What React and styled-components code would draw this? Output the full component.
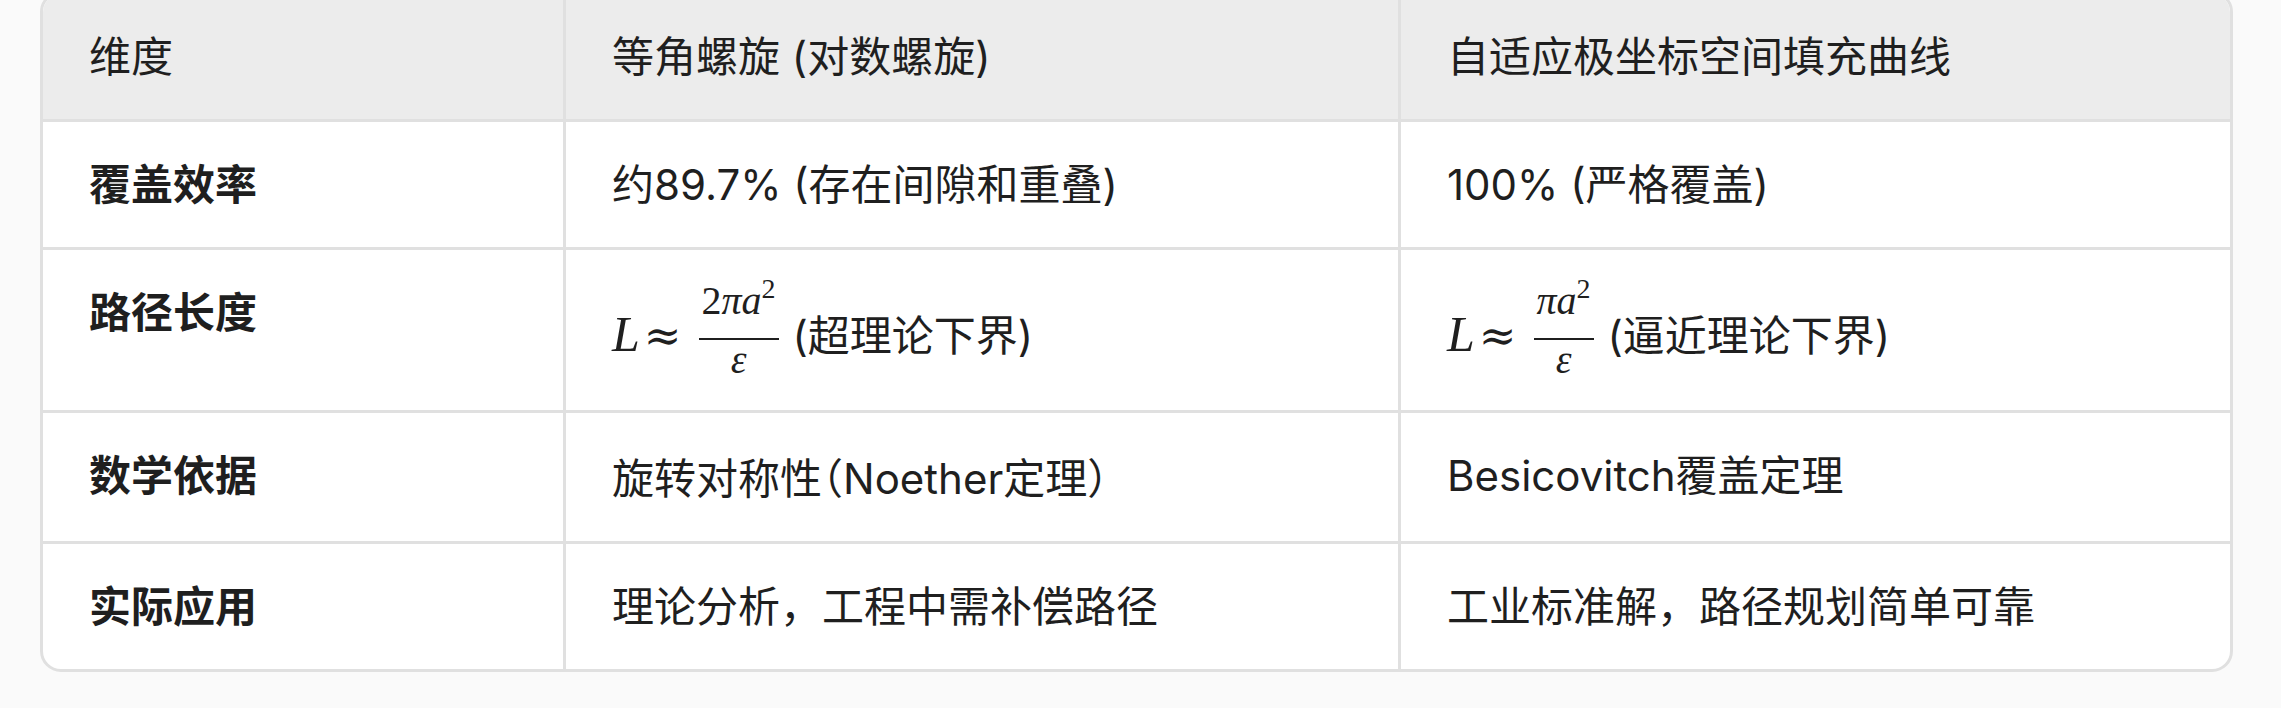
import React from 'react';
import styled, { createGlobalStyle } from 'styled-components';

const GlobalStyle = createGlobalStyle`
    html, body {
        margin: 0;
        padding: 0;
        background: #fafafa;
    }
`;

const Page = styled.div`
    box-sizing: border-box;
    min-height: 100vh;
    padding: 0 48px 0 40px;
    background: #fafafa;
    font-family: "Inter", "Noto Sans CJK SC", sans-serif;
    color: #1f1f1f;
`;

const Table = styled.div`
    display: grid;
    grid-template-columns: 523px 835px 1fr;
    margin-top: -9px;
    border: 3px solid #e0e0e0;
    border-radius: 21px;
    overflow: hidden;
    background: #ffffff;
`;

const Row = styled.div`
    display: contents;
`;

const Cell = styled.div`
    box-sizing: border-box;
    padding: 31px 46px;
    font-size: 42px;
    line-height: 63px;
    font-weight: ${props => (props.$label ? 700 : 400)};
    background: ${props => (props.$head ? '#ececec' : 'transparent')};
    border-right: ${props => (props.$lastCol ? 'none' : '3px solid #e0e0e0')};
    border-bottom: ${props => (props.$lastRow ? 'none' : '3px solid #e0e0e0')};
    white-space: nowrap;
`;

// full-width brackets set half-width, as the source renders them
const Halt = styled.span`
    font-family: "Noto Sans CJK SC", sans-serif;
    font-feature-settings: "halt";
`;

const MathRun = styled.span`
    font-family: "Liberation Serif", "DejaVu Serif", serif;
    font-size: 50px;
    font-weight: 400;
`;

const Var = styled.span`
    font-style: italic;
`;

const Rel = styled.span`
    display: inline-block;
    margin: 0 15px 0 4px;
    font-family: "DejaVu Serif", serif;
    font-size: 45px;
    line-height: 0;
`;

const Frac = styled.span`
    display: inline-flex;
    flex-direction: column;
    align-items: center;
    vertical-align: 37px;
    padding: 0 2px;
    font-size: 40px;
    line-height: 40px;
`;

const Num = styled.span`
    padding: 0 3px;
`;

const Sup = styled.span`
    font-size: 28px;
    line-height: 0;
    vertical-align: 16px;
`;

const Bar = styled.span`
    align-self: stretch;
    height: 2px;
    margin-top: 17px;
    background: #1f1f1f;
`;

const Den = styled.span`
    line-height: 39px;
`;

const Note = styled.span`
    font-family: "Inter", "Noto Sans CJK SC", sans-serif;
    font-size: 42px;
`;

const PathLength = ({ twoPi, note }) => (
    <>
        <MathRun>
            <Var>L</Var>
            <Rel>≈</Rel>
            <Frac>
                <Num>
                    {twoPi && '2'}
                    <Var>πa</Var>
                    <Sup>2</Sup>
                </Num>
                <Bar />
                <Den>
                    <Var>ε</Var>
                </Den>
            </Frac>
        </MathRun>
        <Note> {note}</Note>
    </>
);

const header = ['维度', '等角螺旋 (对数螺旋)', '自适应极坐标空间填充曲线'];

const rows = [
    ['覆盖效率', '约89.7% (存在间隙和重叠)', '100% (严格覆盖)'],
    ['路径长度', <PathLength twoPi note="(超理论下界)" />, <PathLength note="(逼近理论下界)" />],
    [
        '数学依据',
        <>
            旋转对称性<Halt>（</Halt>Noether定理<Halt>）</Halt>
        </>,
        'Besicovitch覆盖定理',
    ],
    ['实际应用', '理论分析，工程中需补偿路径', '工业标准解，路径规划简单可靠'],
];

export default function App() {
    return (
        <Page>
            <GlobalStyle />
            <Table>
                <Row>
                    {header.map((text, i) => (
                        <Cell key={i} $head $lastCol={i === header.length - 1}>
                            {text}
                        </Cell>
                    ))}
                </Row>
                {rows.map((row, r) => (
                    <Row key={r}>
                        {row.map((content, i) => (
                            <Cell
                                key={i}
                                $label={i === 0}
                                $lastCol={i === row.length - 1}
                                $lastRow={r === rows.length - 1}
                            >
                                {content}
                            </Cell>
                        ))}
                    </Row>
                ))}
            </Table>
        </Page>
    );
}
